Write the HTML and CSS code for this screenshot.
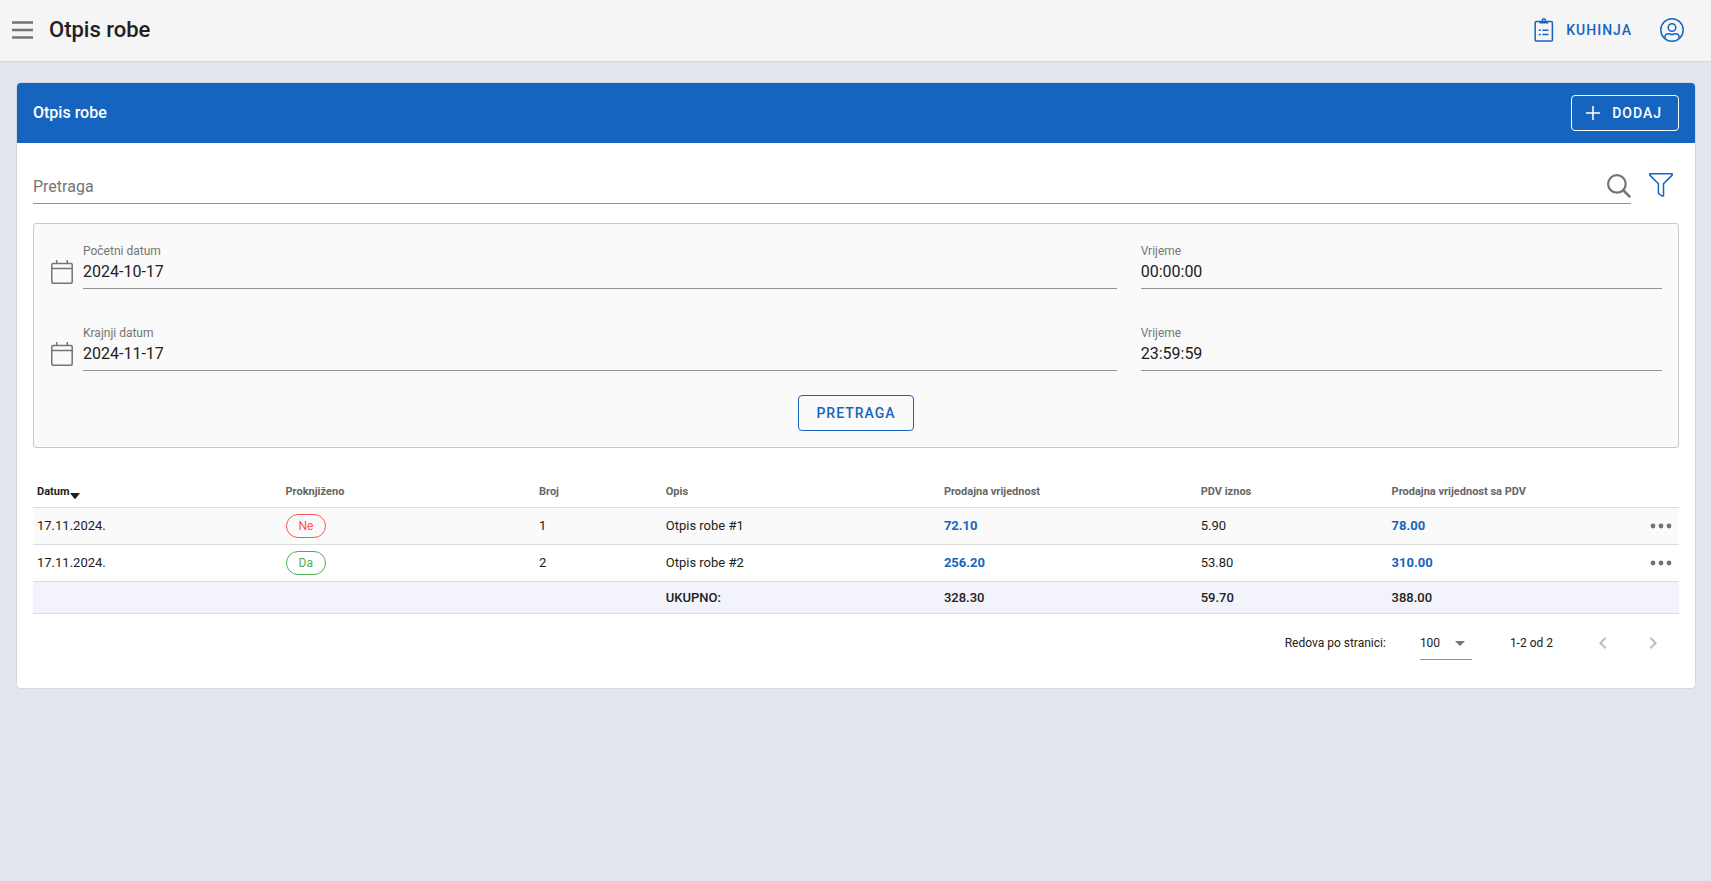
FILE: index.html
```
<!DOCTYPE html>
<html lang="hr">
<head>
  <meta charset="UTF-8" />
  <meta name="viewport" content="width=device-width, initial-scale=1.0" />
  <title>Otpis robe</title>
  <link rel="stylesheet" href="styles.css">
</head>
<body>
  <header class="app-bar">
    <button class="icon-btn menu-btn" aria-label="Izbornik">
      <svg width="21" height="18" viewBox="0 0 21 18"><path d="M0 1.500h21M0 9h21M0 16.500h21" stroke-width="2.400"/></svg>
    </button>
    <h1>Otpis robe</h1>
    <nav class="app-nav">
      <a href="#" class="nav-link">
        <svg width="20" height="24" viewBox="0 0 20 24">
          <rect x="1.200" y="3.500" width="17.200" height="19.600" rx="1.200" stroke-width="1.500"/>
          <path d="M5.400 5.400V3.800q0-.8.800-.8h7.200q.8 0 .8.800v1.600z" fill="currentColor" stroke="none"/>
          <circle cx="9.800" cy="2.400" r="1.600" stroke-width="1.400"/>
          <path d="M8.400 12.300h6M8.400 16.500h6M4.800 12.300h2M4.800 16.500h2" stroke-width="1.500"/>
        </svg>
        <span>KUHINJA</span>
      </a>
      <a href="#" class="nav-user" aria-label="Korisnik">
        <svg width="24" height="24" viewBox="0 0 24 24">
          <circle cx="12" cy="12" r="11.200"/>
          <circle cx="12" cy="9.500" r="3.800"/>
          <path d="M5 20.500v-1.600c0-2 1.300-3.200 3.200-3.200 1.200 0 1.800.8 3.800.8s2.600-.8 3.800-.8c1.900 0 3.200 1.200 3.200 3.200v1.600"/>
        </svg>
      </a>
    </nav>
  </header>

  <main>
    <section class="card">
      <div class="card-header">
        <h2>Otpis robe</h2>
        <button class="btn btn-add">
          <svg width="14" height="14" viewBox="0 0 14 14"><path d="M7 0v14M0 7h14" stroke-width="1.600"/></svg>
          <span>DODAJ</span>
        </button>
      </div>

      <div class="card-body">
        <div class="search-row">
          <div class="search-field">
            <input type="text" placeholder="Pretraga" aria-label="Pretraga" />
            <svg width="24" height="24" viewBox="0 0 24 24"><circle cx="9.900" cy="9.900" r="8.800" stroke-width="2.200"/><path d="M16 16l7.200 7.200" stroke-width="2.600"/></svg>
          </div>
          <button class="icon-btn filter-btn" aria-label="Filter">
            <svg width="24" height="24" viewBox="0 0 24 24"><path d="M.8.8h22.400v1.300l-8.700 8.700v12.200h-1.600l-3.500-2.600v-9.600L.8 2.100z" stroke-width="1.500" stroke-linejoin="round"/></svg>
          </button>
        </div>

        <form class="filter-panel">
          <div class="filter-row">
            <div class="date-field">
              <svg width="22" height="24" viewBox="0 0 22 24"><rect x=".8" y="3.500" width="20.400" height="19.700" rx="1.200" stroke-width="1.500"/><path d="M1 8.500h20M5.700 0v3.500M16.300 0v3.500" stroke-width="1.500"/></svg>
              <div class="field">
                <label for="dateFrom">Početni datum</label>
                <input type="text" id="dateFrom" value="2024-10-17" />
              </div>
            </div>
            <div class="field">
              <label for="timeFrom">Vrijeme</label>
              <input type="text" id="timeFrom" value="00:00:00" />
            </div>
          </div>
          <div class="filter-row">
            <div class="date-field">
              <svg width="22" height="24" viewBox="0 0 22 24"><rect x=".8" y="3.500" width="20.400" height="19.700" rx="1.200" stroke-width="1.500"/><path d="M1 8.500h20M5.700 0v3.500M16.300 0v3.500" stroke-width="1.500"/></svg>
              <div class="field">
                <label for="dateTo">Krajnji datum</label>
                <input type="text" id="dateTo" value="2024-11-17" />
              </div>
            </div>
            <div class="field">
              <label for="timeTo">Vrijeme</label>
              <input type="text" id="timeTo" value="23:59:59" />
            </div>
          </div>
          <button type="button" class="btn btn-search">PRETRAGA</button>
        </form>

        <table>
          <colgroup>
            <col class="col-date"><col class="col-status"><col class="col-no"><col class="col-desc">
            <col class="col-value"><col class="col-tax"><col>
            <col class="col-actions">
          </colgroup>
          <thead>
            <tr>
              <th class="sorted">Datum<svg width="10" height="6" viewBox="0 0 10 6"><path d="M0 0h10L5.800 5.400q-.8.800-1.600 0z"/></svg></th>
              <th>Proknjiženo</th>
              <th>Broj</th>
              <th>Opis</th>
              <th>Prodajna vrijednost</th>
              <th>PDV iznos</th>
              <th>Prodajna vrijednost sa PDV</th>
              <th></th>
            </tr>
          </thead>
          <tbody>
            <tr>
              <td>17.11.2024.</td>
              <td><span class="chip chip-no">Ne</span></td>
              <td>1</td>
              <td>Otpis robe #1</td>
              <td class="amount">72.10</td>
              <td>5.90</td>
              <td class="amount">78.00</td>
              <td class="actions"><button class="icon-btn" aria-label="Akcije"><svg width="22" height="6" viewBox="0 0 22 6"><circle cx="3" cy="3" r="2.400"/><circle cx="11" cy="3" r="2.400"/><circle cx="19" cy="3" r="2.400"/></svg></button></td>
            </tr>
            <tr>
              <td>17.11.2024.</td>
              <td><span class="chip chip-yes">Da</span></td>
              <td>2</td>
              <td>Otpis robe #2</td>
              <td class="amount">256.20</td>
              <td>53.80</td>
              <td class="amount">310.00</td>
              <td class="actions"><button class="icon-btn" aria-label="Akcije"><svg width="22" height="6" viewBox="0 0 22 6"><circle cx="3" cy="3" r="2.400"/><circle cx="11" cy="3" r="2.400"/><circle cx="19" cy="3" r="2.400"/></svg></button></td>
            </tr>
          </tbody>
          <tfoot>
            <tr>
              <td></td>
              <td></td>
              <td></td>
              <td>UKUPNO:</td>
              <td>328.30</td>
              <td>59.70</td>
              <td>388.00</td>
              <td></td>
            </tr>
          </tfoot>
        </table>

        <div class="pagination">
          <label for="perPage">Redova po stranici:</label>
          <div class="select">
            <select id="perPage">
              <option>50</option>
              <option selected>100</option>
            </select>
            <svg width="10" height="5" viewBox="0 0 10 5"><path d="M0 0h10L5 5z"/></svg>
          </div>
          <span class="range">1-2 od 2</span>
          <button class="icon-btn page-btn" aria-label="Prethodna" disabled>
            <svg width="24" height="24" viewBox="0 0 24 24"><path d="M15.410 16.580L10.830 12l4.580-4.590L14 6l-6 6 6 6z"/></svg>
          </button>
          <button class="icon-btn page-btn" aria-label="Sljedeća" disabled>
            <svg width="24" height="24" viewBox="0 0 24 24"><path d="M8.590 16.580L13.170 12 8.590 7.410 10 6l6 6-6 6z"/></svg>
          </button>
        </div>
      </div>
    </section>
  </main>
</body>
</html>
```
FILE: styles.css
```
* {
  box-sizing: border-box;
}
body {
  font-family: Roboto, sans-serif;
  font-size: 16px;
  line-height: 24px;
  color: #212121;
  background: #e2e5ee;
  margin: 0;
}
h1, h2 {
  margin: 0;
  font-weight: 500;
}
svg {
  display: block;
  flex: none;
  fill: none;
  stroke: currentColor;
  stroke-width: 1.5;
}
a {
  color: #1565c0;
  text-decoration: none;
}
input, select, button {
  font-family: inherit;
}
.icon-btn {
  display: flex;
  align-items: center;
  justify-content: center;
  padding: 0;
  border: none;
  background: none;
  color: #757575;
  cursor: pointer;
}

/* app bar */
.app-bar {
  display: flex;
  align-items: center;
  height: 62px;
  padding: 0 27px 2px 12px;
  background: #f5f5f5;
  border-bottom: 1px solid #d5d8e2;
}
.app-bar h1 {
  margin-left: 16px;
  font-size: 22px;
}
.app-nav {
  display: flex;
  align-items: center;
  gap: 28px;
  margin-left: auto;
}
.nav-link {
  display: flex;
  align-items: center;
  gap: 12px;
  font-size: 14px;
  font-weight: 500;
  letter-spacing: 1px;
}

/* card */
main {
  padding: 20px 15px 20px 16px;
}
.card {
  background: #fff;
  border: 1px solid #d5d8e2;
  border-radius: 5px;
  overflow: hidden;
}
.card-header {
  display: flex;
  align-items: center;
  justify-content: space-between;
  height: 60px;
  padding: 0 16px;
  background: #1565c0;
  color: #fff;
}
.card-header h2 {
  font-size: 16px;
}
.card-body {
  padding: 12px 16px 8px;
}
.btn {
  display: flex;
  align-items: center;
  height: 36px;
  padding: 0 17px;
  border: 1px solid currentColor;
  border-radius: 4px;
  background: none;
  font-size: 14px;
  font-weight: 500;
  letter-spacing: 1px;
  cursor: pointer;
}
.btn-add {
  gap: 12px;
  padding: 0 16px 0 14px;
  color: #fff;
}

/* search */
.search-row {
  display: flex;
  align-items: center;
  gap: 12px;
  margin-bottom: 19px;
}
.search-field {
  flex: 1;
  display: flex;
  align-items: center;
  height: 49px;
  padding-top: 14px;
  border-bottom: 1px solid #949494;
  color: #757575;
}
.search-field input {
  flex: 1;
  padding: 0;
  border: none;
  background: none;
  font-size: 16px;
  outline: none;
}
.search-field input::placeholder {
  color: #757575;
}
.filter-btn {
  width: 36px;
  height: 36px;
  margin-top: 10px;
  color: #1565c0;
}

/* filter */
.filter-panel {
  padding: 20px 4px 16px;
  border: 1px solid #c8c8c8;
  border-radius: 3px;
  background: #fafafa;
}
.filter-row {
  display: grid;
  grid-template-columns: 2fr 1fr;
  margin-bottom: 37px;
}
.filter-row > * {
  margin: 0 12px;
}
.date-field {
  display: flex;
  align-items: center;
  gap: 10px;
  padding-left: 1px;
  color: #757575;
}
.date-field > svg {
  margin-top: 10px;
}
.date-field .field {
  flex: 1;
}
.field label {
  display: block;
  font-size: 12px;
  line-height: 14px;
  color: #757575;
}
.field input {
  display: block;
  width: 100%;
  height: 31px;
  padding: 0 0 3px;
  border: none;
  border-bottom: 1px solid #949494;
  background: none;
  font-size: 16px;
  color: #212121;
  outline: none;
}
.btn-search {
  margin: -13px auto 0;
  color: #1565c0;
}

/* table */
table {
  width: 100%;
  margin-top: 27px;
  border-collapse: separate;
  border-spacing: 0;
  table-layout: fixed;
  font-size: 13px;
  line-height: 20px;
}
.col-date { width: 15.1%; }
.col-status { width: 15.4%; }
.col-no { width: 7.7%; }
.col-desc { width: 16.9%; }
.col-value { width: 15.6%; }
.col-tax { width: 11.6%; }
.col-actions { width: 40px; }
th, td {
  padding: 0 4px;
  text-align: left;
  border-bottom: 1px solid #dcdcdc;
}
th {
  height: 33px;
  padding-top: 2px;
  font-size: 11px;
  font-weight: 700;
  color: #666;
}
th.sorted {
  color: #212121;
}
th svg {
  display: inline-block;
  margin-left: 1px;
  vertical-align: -4px;
  fill: currentColor;
  stroke: none;
}
tbody td {
  height: 37px;
}
tbody tr:first-child {
  background: #fafafa;
}
.amount {
  font-weight: 700;
  color: #1565c0;
}
.chip {
  display: inline-block;
  padding: 0 12px;
  border: 1px solid currentColor;
  border-radius: 12px;
  font-size: 12px;
  line-height: 22px;
  vertical-align: middle;
}
.chip-no {
  color: #ff5252;
}
.chip-yes {
  color: #4caf50;
}
.actions .icon-btn {
  margin-left: auto;
  height: 24px;
}
.actions {
  padding-right: 7px;
}
.actions svg {
  fill: currentColor;
  stroke: none;
}
tfoot td {
  height: 32px;
  background: #f2f3fb;
  font-weight: 500;
}

/* pagination */
.pagination {
  display: flex;
  align-items: center;
  justify-content: flex-end;
  height: 58px;
  margin-bottom: 8px;
  padding-right: 14px;
  font-size: 12px;
}
.select {
  position: relative;
  margin: 0 38px 0 34px;
}
.select select {
  display: block;
  width: 52px;
  height: 33px;
  padding: 0;
  border: none;
  border-bottom: 1px solid #949494;
  border-radius: 0;
  background: none;
  font-size: 12px;
  color: #212121;
  appearance: none;
}
.select svg {
  position: absolute;
  right: 7px;
  top: 14px;
  fill: #757575;
  stroke: none;
  pointer-events: none;
}
.range {
  margin-right: 38px;
}
.page-btn {
  width: 24px;
  height: 24px;
  color: #bdbdbd;
}
.page-btn svg {
  fill: currentColor;
  stroke: none;
}
.page-btn + .page-btn {
  margin-left: 26px;
}
```
